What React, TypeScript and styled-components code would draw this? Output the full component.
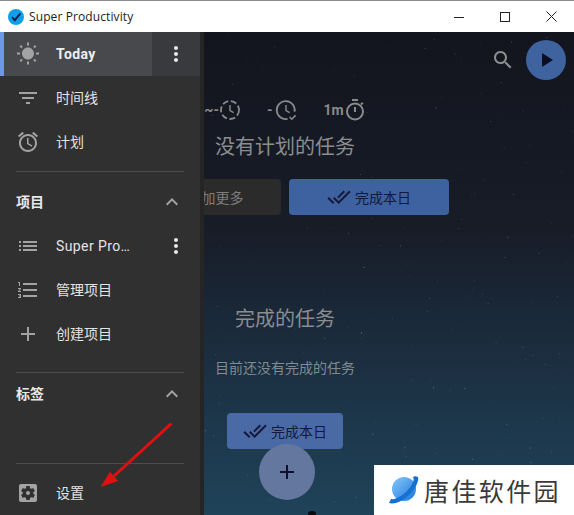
import React from 'react';
import styled, { createGlobalStyle } from 'styled-components';

const GlobalStyle = createGlobalStyle`
  html, body {
    margin: 0;
    padding: 0;
    background: #fff;
  }
  * {
    box-sizing: border-box;
  }
`;

const CJK = '"Roboto", "Noto Sans CJK SC", sans-serif';

const Window = styled.div`
  width: 574px;
  height: 515px;
  position: relative;
  overflow: hidden;
  display: flex;
  flex-direction: column;
  font-family: ${CJK};
`;

const TitleBar = styled.header`
  height: 32px;
  flex: none;
  display: flex;
  align-items: center;
  background: #fff;
  border-top: 1px solid #8c8c8c;
  padding-left: 8px;
`;

const AppName = styled.span`
  font-family: 'Open Sans', sans-serif;
  font-size: 12px;
  color: #222;
  margin-left: 5px;
  letter-spacing: 0.1px;
`;

const WindowControls = styled.div`
  margin-left: auto;
  display: flex;
  height: 100%;
`;

const WindowButton = styled.div`
  width: 46px;
  display: flex;
  align-items: center;
  justify-content: center;
  color: #222;
`;

const Workspace = styled.div`
  position: relative;
  flex: 1;
  min-height: 0;
`;

const Main = styled.main`
  position: relative;
  height: 100%;
  background: linear-gradient(180deg, #13151e 0%, #171c27 40%, #1c3144 72%, #1f4359 100%);
  display: flex;
  flex-direction: column;
  align-items: center;
  padding-right: 4px;
`;

const StarField = styled.svg`
  position: absolute;
  inset: 0;
  width: 100%;
  height: 100%;
`;

const MainBar = styled.div`
  position: relative;
  align-self: stretch;
  height: 56px;
  flex: none;
  display: flex;
  align-items: center;
  justify-content: flex-end;
  padding-right: 4px;
  gap: 11px;
`;

const SearchIcon = styled.span`
  color: #8e8e8e;
`;

const PlayButton = styled.div`
  width: 40px;
  height: 40px;
  border-radius: 50%;
  background: #3e639f;
  display: flex;
  align-items: center;
  justify-content: center;
  color: #0d0d22;
`;

const Metrics = styled.div`
  position: relative;
  display: flex;
  align-items: center;
  height: 32px;
  margin-top: 6px;
  gap: 26px;
  color: #8a8a8a;
`;

const Metric = styled.div`
  display: flex;
  align-items: center;
  font-size: 14px;
  font-weight: 700;
  font-family: 'Roboto', sans-serif;
`;

const MetricDash = styled.span`
  margin-right: 3px;
`;

const Heading = styled.h2<{ $top: number }>`
  position: relative;
  margin: ${({ $top }) => $top}px 0 0;
  font-size: 20px;
  line-height: 28px;
  font-weight: 400;
  color: #8b8d8f;
`;

const ButtonRow = styled.div`
  position: relative;
  display: flex;
  gap: 8px;
  margin-top: 18px;
`;

const GhostButton = styled.div`
  width: 160px;
  height: 36px;
  border-radius: 4px;
  background: #2b2b2b;
  color: #7d7d7d;
  font-size: 14px;
  display: flex;
  align-items: center;
  justify-content: center;
  gap: 5px;
`;

const FinishButton = styled.div<{ $width: number; $bright?: boolean }>`
  position: relative;
  width: ${({ $width }) => $width}px;
  height: 36px;
  border-radius: 4px;
  background: ${({ $bright }) => ($bright ? '#4a6aa6' : '#3e62a0')};
  color: #14183a;
  font-size: 14px;
  display: flex;
  align-items: center;
  justify-content: center;
  gap: 4px;
`;

const EmptyMessage = styled.p`
  position: relative;
  margin: 25px 0 0;
  font-size: 14px;
  line-height: 20px;
  color: #7f8b91;
`;

const LowerButton = styled(FinishButton)`
  margin-top: 35px;
`;

const Fab = styled.div`
  position: absolute;
  left: 259px;
  top: 412px;
  width: 56px;
  height: 56px;
  border-radius: 50%;
  background: #64779f;
  display: flex;
  align-items: center;
  justify-content: center;
  color: #10102e;
`;

const Sidebar = styled.nav`
  position: absolute;
  left: 0;
  top: 0;
  bottom: 0;
  width: 204px;
  background: #303030;
  border-right: 4px solid #252525;
  display: flex;
  flex-direction: column;
`;

const Row = styled.div`
  height: 44px;
  flex: none;
  display: flex;
  align-items: center;
  padding-left: 16px;
  color: #e4e4e4;
  font-size: 14px;
`;

const ActiveRow = styled(Row)`
  background: #393a3d;
  padding-left: 0;
`;

const ActiveLink = styled.div`
  width: 152px;
  height: 100%;
  display: flex;
  align-items: center;
  background: #48494d;
  border-left: 4px solid #6e97ea;
  padding-left: 12px;
  font-weight: 700;
  color: #eee;
`;

const RowIcon = styled.span`
  width: 24px;
  height: 24px;
  flex: none;
  margin-right: 16px;
  color: #a3a3a3;
  display: block;
`;

const RowLabel = styled.span<{ $latin?: boolean }>`
  flex: 1;
  white-space: nowrap;
  letter-spacing: ${({ $latin }) => ($latin ? '0.4px' : '0')};
  padding-bottom: ${({ $latin }) => ($latin ? '0' : '2px')};
`;

const Dots = styled.span`
  width: 24px;
  height: 24px;
  flex: none;
  color: #e8e8e8;
  margin-right: 12px;
  margin-left: auto;
`;

const Divider = styled.hr<{ $top: number }>`
  flex: none;
  width: 168px;
  height: 1px;
  border: 0;
  margin: ${({ $top }) => $top}px 0 0 16px;
  background: #4d4d4d;
`;

const SectionHeader = styled.div<{ $top: number }>`
  height: 44px;
  flex: none;
  margin-top: ${({ $top }) => $top}px;
  display: flex;
  align-items: center;
  justify-content: space-between;
  padding: 0 16px;
  font-size: 14px;
  font-weight: 700;
  color: #e8e8e8;
`;

const SectionTitle = styled.span`
  padding-bottom: 2px;
`;

const Chevron = styled.span`
  width: 24px;
  height: 24px;
  color: #a3a3a3;
`;

const Spacer = styled.div`
  flex: 1;
`;

const SettingsRow = styled(Row)`
  margin-top: 7px;
`;

const ArrowLayer = styled.svg`
  position: absolute;
  left: 90px;
  top: 391px;
  width: 90px;
  height: 90px;
`;

const Watermark = styled.div`
  position: absolute;
  right: 0;
  bottom: 0;
  width: 200px;
  height: 50px;
  background: #fff;
  display: flex;
  align-items: center;
  padding-left: 15px;
  gap: 5px;
`;

const WatermarkText = styled.span`
  font-family: 'Noto Sans CJK SC', sans-serif;
  font-size: 25px;
  font-weight: 400;
  letter-spacing: 2.4px;
  color: #3a3a3a;
  white-space: nowrap;
`;

type IconProps = { d: string; size?: number };

const Icon = ({ d, size = 24 }: IconProps) => (
  <svg width={size} height={size} viewBox="0 0 24 24" fill="currentColor" style={{ display: 'block' }}>
    <path d={d} />
  </svg>
);

const icons = {
  sun: 'M6.76 4.84l-1.8-1.79-1.41 1.41 1.79 1.79 1.42-1.41zM4 10.5H1v2h3v-2zm9-9.95h-2V3.5h2V.55zm7.45 3.91l-1.41-1.41-1.79 1.79 1.41 1.41 1.79-1.79zm-3.21 13.7l1.79 1.8 1.41-1.41-1.8-1.79-1.4 1.4zM20 10.5v2h3v-2h-3zm-8-5c-3.31 0-6 2.69-6 6s2.69 6 6 6 6-2.69 6-6-2.69-6-6-6zm-1 16.95h2V19.5h-2v2.95zm-7.45-3.91l1.41 1.41 1.79-1.8-1.41-1.41-1.79 1.8z',
  filter: 'M10 18h4v-2h-4v2zM3 6v2h18V6H3zm3 7h12v-2H6v2z',
  alarm: 'M22 5.72l-4.6-3.86-1.29 1.53 4.6 3.86L22 5.72zM7.88 3.39L6.6 1.86 2 5.71l1.29 1.53 4.59-3.85zM12.5 8H11v6l4.75 2.85.75-1.23-4-2.37V8zM12 4c-4.97 0-9 4.03-9 9s4.03 9 9 9 9-4.03 9-9-4.03-9-9-9zm0 16c-3.87 0-7-3.13-7-7s3.13-7 7-7 7 3.13 7 7-3.13 7-7 7z',
  list: 'M3 13h2v-2H3v2zm0 4h2v-2H3v2zm0-8h2V7H3v2zm4 4h14v-2H7v2zm0 4h14v-2H7v2zM7 7v2h14V7H7z',
  numbered: 'M2 17h2v.5H3v1h1v.5H2v1h3v-4H2v1zm1-9h1V4H2v1h1v3zm-1 3h1.8L2 13.1v.9h3v-1H3.2L5 10.9V10H2v1zm5-6v2h14V5H7zm0 14h14v-2H7v2zm0-6h14v-2H7v2z',
  add: 'M19 13h-6v6h-2v-6H5v-2h6V5h2v6h6v2z',
  chevron: 'M12 8l-6 6 1.41 1.41L12 10.83l4.59 4.58L18 14z',
  dots: 'M12 8c1.1 0 2-.9 2-2s-.9-2-2-2-2 .9-2 2 .9 2 2 2zm0 2c-1.1 0-2 .9-2 2s.9 2 2 2 2-.9 2-2-.9-2-2-2zm0 6c-1.1 0-2 .9-2 2s.9 2 2 2 2-.9 2-2-.9-2-2-2z',
  search: 'M15.5 14h-.79l-.28-.27C15.41 12.59 16 11.11 16 9.5 16 5.91 13.09 3 9.5 3S3 5.91 3 9.5 5.91 16 9.5 16c1.61 0 3.09-.59 4.23-1.57l.27.28v.79l5 4.99L20.49 19l-4.99-5zm-6 0C7.01 14 5 11.99 5 9.5S7.01 5 9.5 5 14 7.01 14 9.5 11.99 14 9.5 14z',
  play: 'M8 5v14l11-7z',
  doneAll: 'M18 7l-1.41-1.41-6.34 6.34 1.41 1.41L18 7zm4.24-1.41L11.66 16.17 7.48 12l-1.41 1.41L11.66 19l12-12-1.42-1.41zM.41 13.41L6 19l1.41-1.41L1.83 12 .41 13.41z',
  settings: 'M12 10c-1.1 0-2 .9-2 2s.9 2 2 2 2-.9 2-2-.9-2-2-2zm7-7H5c-1.11 0-2 .9-2 2v14c0 1.1.89 2 2 2h14c1.11 0 2-.9 2-2V5c0-1.1-.89-2-2-2zm-1.75 9c0 .23-.02.46-.05.68l1.48 1.16c.13.11.17.3.08.45l-1.4 2.42c-.09.15-.27.21-.43.15l-1.74-.7c-.36.28-.76.51-1.18.69l-.26 1.85c-.03.17-.18.3-.35.3h-2.8c-.17 0-.32-.13-.35-.29l-.26-1.85c-.43-.18-.82-.41-1.18-.69l-1.74.7c-.16.06-.34 0-.43-.15l-1.4-2.42c-.09-.15-.05-.34.08-.45l1.48-1.16c-.03-.23-.05-.46-.05-.69 0-.23.02-.46.05-.68l-1.48-1.16c-.13-.11-.17-.3-.08-.45l1.4-2.42c.09-.15.27-.21.43-.15l1.74.7c.36-.28.76-.51 1.18-.69l.26-1.85c.03-.17.18-.3.35-.3h2.8c.17 0 .32.13.35.29l.26 1.85c.43.18.82.41 1.18.69l1.74-.7c.16-.06.34 0 .43.15l1.4 2.42c.09.15.05.34-.08.45l-1.48 1.16c.03.23.05.46.05.69z',
};

const AppLogo = () => (
  <svg width="16" height="16" viewBox="0 0 16 16">
    <circle cx="8" cy="8" r="8" fill="#0f9fe8" />
    <path d="M4 8.2l2.8 3L12.4 4.4" fill="none" stroke="#10204a" strokeWidth="1.9" />
  </svg>
);

const DashedClock = () => (
  <svg width="22" height="22" viewBox="0 0 22 22" fill="none" stroke="currentColor" strokeWidth="1.8">
    <circle cx="11" cy="11" r="9" strokeDasharray="6 2.6" />
    <path d="M11 6v5.5l3.6 2.2" strokeWidth="1.4" />
  </svg>
);

const CheckClock = () => (
  <svg width="22" height="22" viewBox="0 0 22 22" fill="none" stroke="currentColor" strokeWidth="1.8">
    <path d="M19.6 12.6A9 9 0 1 0 12.5 19.9" />
    <path d="M11 6v5.5l3.6 2.2" strokeWidth="1.4" />
    <path d="M14.6 18l2.2 2.2 3.8-3.8" strokeWidth="1.6" />
  </svg>
);

const TimerIcon = () => (
  <svg width="22" height="24" viewBox="0 0 22 24" fill="none" stroke="currentColor" strokeWidth="2">
    <path d="M8 2h6" />
    <circle cx="11" cy="13.5" r="8" />
    <path d="M11 9v5" />
    <path d="M17 6.5l1.8-1.8" />
  </svg>
);

const PlanetLogo = () => (
  <svg width="30" height="30" viewBox="0 0 30 30">
    <defs>
      <linearGradient id="planet" x1="0" y1="0" x2="1" y2="1">
        <stop offset="0" stopColor="#8cc8fb" />
        <stop offset="1" stopColor="#1577dc" />
      </linearGradient>
    </defs>
    <circle cx="15" cy="14" r="12" fill="url(#planet)" />
    <path d="M0 28c6 2 16-3 22-10s8-13 7-16c-2-1-4-1-5 0 2 3-1 9-6 14S6 25 2 24z" fill="#1670d0" />
  </svg>
);

// star positions come from a small seeded generator so every render is the same
const makeStars = () => {
  let seed = 7;
  const next = () => {
    seed = (seed * 16807) % 2147483647;
    return seed / 2147483647;
  };
  return Array.from({ length: 240 }, () => ({
    x: 200 + next() * 374,
    y: next() * 483,
    r: 0.2 + next() * 0.35,
    o: 0.1 + next() * 0.3,
  }));
};

const stars = makeStars();

export default function App() {
  return (
    <Window>
      <GlobalStyle />
      <TitleBar>
        <AppLogo />
        <AppName>Super Productivity</AppName>
        <WindowControls>
          <WindowButton>
            <svg width="10" height="10" viewBox="0 0 10 10" stroke="currentColor"><path d="M0 5.5h10" /></svg>
          </WindowButton>
          <WindowButton>
            <svg width="10" height="10" viewBox="0 0 10 10" stroke="currentColor" fill="none"><rect x=".5" y=".5" width="9" height="9" /></svg>
          </WindowButton>
          <WindowButton>
            <svg width="11" height="11" viewBox="0 0 11 11" stroke="currentColor" fill="none"><path d="M.5.5l10 10M10.5.5l-10 10" /></svg>
          </WindowButton>
        </WindowControls>
      </TitleBar>

      <Workspace>
        <Main>
          <StarField viewBox="0 0 574 483">
            {stars.map((s, i) => (
              <circle key={i} cx={s.x} cy={s.y} r={s.r} fill="#fff" opacity={s.o} />
            ))}
            <ellipse cx="312" cy="482" rx="4" ry="3" fill="#0b0b10" />
          </StarField>

          <MainBar>
            <SearchIcon><Icon d={icons.search} /></SearchIcon>
            <PlayButton><Icon d={icons.play} /></PlayButton>
          </MainBar>

          <Metrics>
            <Metric>~-<DashedClock /></Metric>
            <Metric><MetricDash>-</MetricDash><CheckClock /></Metric>
            <Metric>1m<TimerIcon /></Metric>
          </Metrics>

          <Heading $top={7}>没有计划的任务</Heading>

          <ButtonRow>
            <GhostButton><Icon d={icons.add} />添加更多</GhostButton>
            <FinishButton $width={160}><Icon d={icons.doneAll} />完成本日</FinishButton>
          </ButtonRow>

          <Heading $top={90}>完成的任务</Heading>
          <EmptyMessage>目前还没有完成的任务</EmptyMessage>
          <LowerButton $width={116} $bright><Icon d={icons.doneAll} />完成本日</LowerButton>

          <Fab><Icon d={icons.add} /></Fab>
        </Main>

        <Sidebar>
          <ActiveRow>
            <ActiveLink>
              <RowIcon><Icon d={icons.sun} /></RowIcon>
              <RowLabel $latin>Today</RowLabel>
            </ActiveLink>
            <Dots><Icon d={icons.dots} /></Dots>
          </ActiveRow>
          <Row><RowIcon><Icon d={icons.filter} /></RowIcon><RowLabel>时间线</RowLabel></Row>
          <Row><RowIcon><Icon d={icons.alarm} /></RowIcon><RowLabel>计划</RowLabel></Row>

          <Divider $top={7} />
          <SectionHeader $top={8}>
            <SectionTitle>项目</SectionTitle>
            <Chevron><Icon d={icons.chevron} /></Chevron>
          </SectionHeader>
          <Row>
            <RowIcon><Icon d={icons.list} /></RowIcon>
            <RowLabel $latin>Super Pro…</RowLabel>
            <Dots><Icon d={icons.dots} /></Dots>
          </Row>
          <Row><RowIcon><Icon d={icons.numbered} /></RowIcon><RowLabel>管理项目</RowLabel></Row>
          <Row><RowIcon><Icon d={icons.add} /></RowIcon><RowLabel>创建项目</RowLabel></Row>

          <Divider $top={16} />
          <SectionHeader $top={-1}>
            <SectionTitle>标签</SectionTitle>
            <Chevron><Icon d={icons.chevron} /></Chevron>
          </SectionHeader>
          <Spacer />
          <Divider $top={0} />
          <SettingsRow><RowIcon><Icon d={icons.settings} /></RowIcon><RowLabel>设置</RowLabel></SettingsRow>
        </Sidebar>

        <ArrowLayer viewBox="0 0 90 90">
          <path d="M81.5 0.5L24 53" stroke="#e01010" strokeWidth="3" fill="none" />
          <path d="M10.7 63.7L20 48.7L28.3 58z" fill="#e01010" />
        </ArrowLayer>

        <Watermark>
          <PlanetLogo />
          <WatermarkText>唐佳软件园</WatermarkText>
        </Watermark>
      </Workspace>
    </Window>
  );
}
